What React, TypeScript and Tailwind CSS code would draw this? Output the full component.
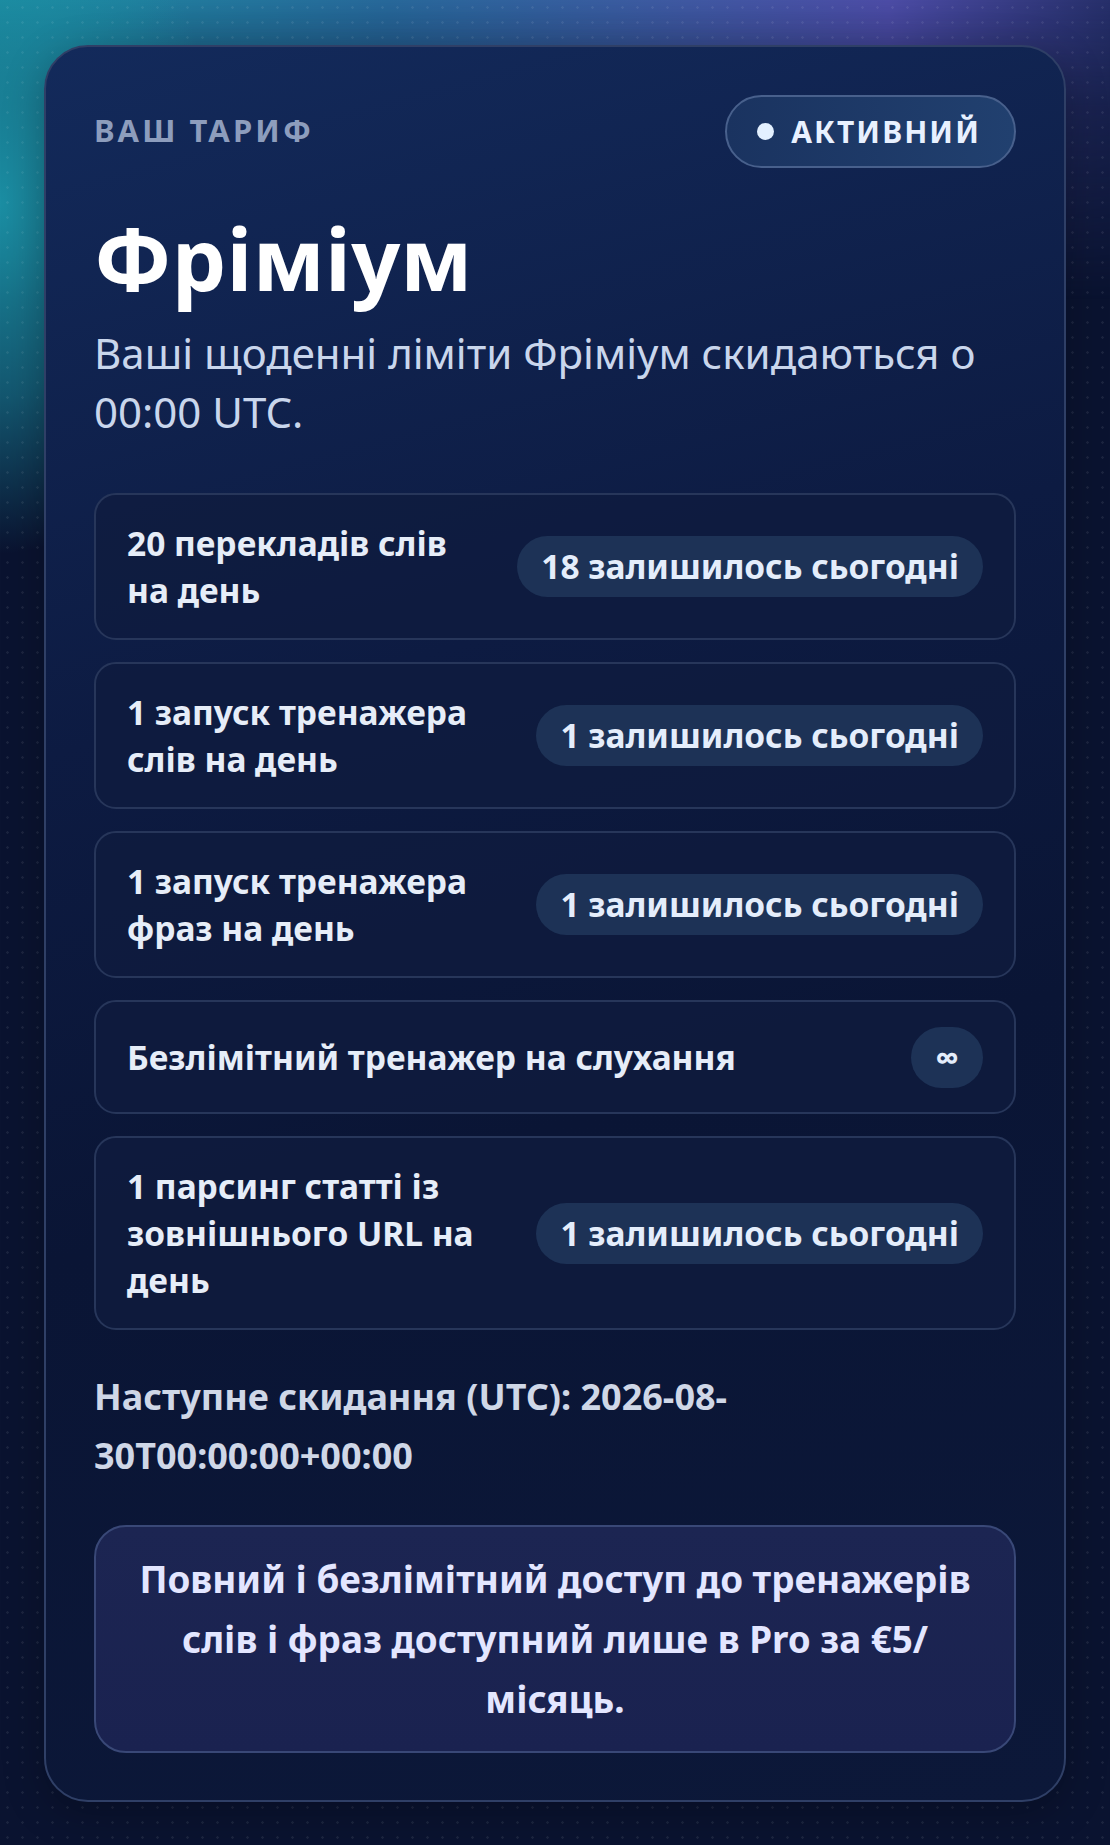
import React from "react";

const limits = [
  { label: "20 перекладів слів на день", left: "18 залишилось сьогодні" },
  { label: "1 запуск тренажера слів на день", left: "1 залишилось сьогодні" },
  { label: "1 запуск тренажера фраз на день", left: "1 залишилось сьогодні" },
  { label: "Безлімітний тренажер на слухання", left: "∞" },
  { label: "1 парсинг статті із зовнішнього URL на день", left: "1 залишилось сьогодні" },
];

function LimitRow({ label, left }: { label: string; left: string }) {
  return (
    <div className="flex items-center gap-[32px] rounded-[22px] border-2 border-[#27365a] bg-[#0f1b3e]/80 px-[31px] py-[24.5px]">
      <p className="flex-1 text-[33.5px] font-bold leading-[47px] text-[#e6edf8]">{label}</p>
      <span className="shrink-0 rounded-full bg-[#1d3256] px-[24px] py-[7px] text-[33.5px] font-bold leading-[47px] text-[#e4edfb]">
        {left}
      </span>
    </div>
  );
}

export default function App() {
  return (
    <div
      className="relative min-h-[1845px] w-full overflow-hidden bg-[#0a1330] px-[44px] pt-[45px] pb-[44px]"
      style={{ fontFamily: '"Noto Sans", "Open Sans", sans-serif' }}
    >
      {/* background glow */}
      <div className="pointer-events-none absolute inset-x-0 top-0 h-[300px] bg-[linear-gradient(90deg,#1c8aa0_0%,#27689a_35%,#3f58a2_62%,#4c4ca6_80%,#262f6a_100%)] [mask-image:linear-gradient(to_bottom,black_0%,rgba(0,0,0,0.5)_35%,transparent_100%)]" />
      <div className="pointer-events-none absolute inset-0 bg-[radial-gradient(ellipse_20%_19%_at_0%_11%,#1b8ea3_0%,rgba(27,142,163,0.55)_55%,transparent_100%)]" />
      <div className="pointer-events-none absolute inset-0 bg-[radial-gradient(rgba(255,255,255,0.07)_1px,transparent_1.5px)] bg-[size:15px_15px]" />

      <div className="relative rounded-[44px] border-2 border-[#2f3f66] bg-[linear-gradient(165deg,#132a5b_0%,#0d1b42_35%,#0a1535_60%,#0c1839_100%)] px-[48px] pt-[48px] pb-[47px] shadow-[0_10px_40px_rgba(0,0,0,0.25)]">
        <div className="flex items-start justify-between">
          <span className="pt-[15px] text-[31px] font-bold uppercase tracking-[0.1em] leading-[40px] text-[#8d9dbd]">
            Ваш тариф
          </span>
          <span className="flex h-[73px] items-center gap-[17px] rounded-full border-2 border-[#48608c] bg-[linear-gradient(90deg,#1a3360,#21406f)] pl-[30px] pr-[33px] text-[30px] font-bold uppercase tracking-[0.07em] text-[#e8f1ff]">
            <span className="h-[17px] w-[17px] rounded-full bg-[#e3f0ff]" />
            Активний
          </span>
        </div>

        <h1 className="mt-[45px] text-[86px] font-bold leading-[90px] text-white">Фріміум</h1>
        <p className="mt-[20px] text-[42px] leading-[59px] text-[#c9d6ec]">
          Ваші щоденні ліміти Фріміум скидаються о 00:00 UTC.
        </p>

        <div className="mt-[52px] flex flex-col gap-[22px]">
          {limits.map((l) => (
            <LimitRow key={l.label} label={l.label} left={l.left} />
          ))}
        </div>

        <p className="mt-[37px] text-[36px] font-bold leading-[59px] text-[#cfd7e7]">
          Наступне скидання (UTC): 2026-08-30T00:00:00+00:00
        </p>

        <div className="mt-[40px] rounded-[32px] border-2 border-[#394877] bg-[linear-gradient(180deg,#1c2552,#1a2250)] px-[30px] py-[22px] text-center text-[36.8px] font-bold leading-[60px] text-[#e3e6ff]">
          Повний і безлімітний доступ до тренажерів слів і фраз доступний лише в Pro за €5/місяць.
        </div>
      </div>
    </div>
  );
}
